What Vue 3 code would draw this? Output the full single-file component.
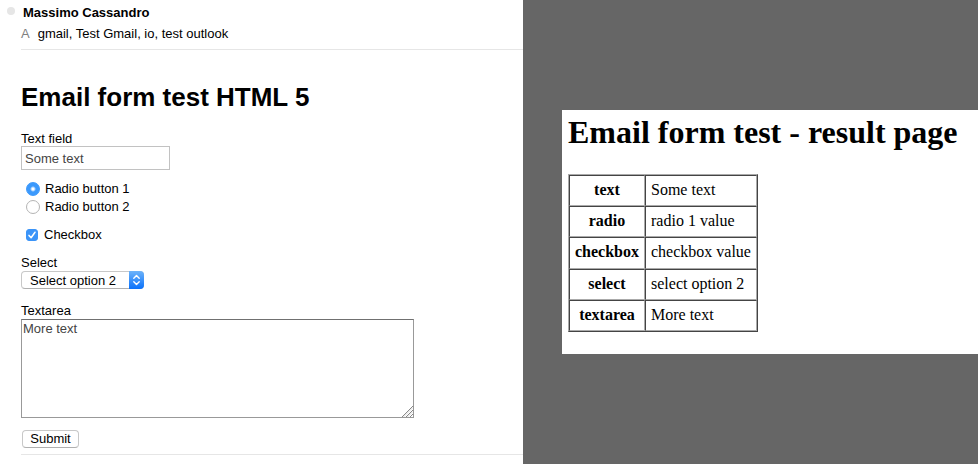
<script setup>
import { ref } from 'vue'

const text = ref('Some text')
const radio = ref('1')
const checked = ref(true)
const option = ref('2')
const more = ref('More text')

const results = [
  ['text', 'Some text'],
  ['radio', 'radio 1 value'],
  ['checkbox', 'checkbox value'],
  ['select', 'select option 2'],
  ['textarea', 'More text'],
]
</script>

<template>
  <main class="page">
    <section class="mail">
      <header class="mail-header">
        <div class="sender"><span class="dot"></span><strong>Massimo Cassandro</strong></div>
        <div class="recipients"><span class="to">A</span>gmail, Test Gmail, io, test outlook</div>
      </header>
      <form class="form" @submit.prevent>
        <h1 class="title">Email form test HTML 5</h1>
        <div class="field">
          <label for="text-field">Text field</label>
          <input id="text-field" v-model="text" class="text-input" type="text" />
        </div>
        <div class="choices">
          <label class="choice"><input v-model="radio" class="radio" type="radio" name="radio" value="1" />Radio button 1</label>
          <label class="choice"><input v-model="radio" class="radio" type="radio" name="radio" value="2" />Radio button 2</label>
        </div>
        <div class="choices">
          <label class="choice">
            <span class="check-wrap">
              <input v-model="checked" class="check" type="checkbox" />
              <svg v-if="checked" class="tick" viewBox="0 0 12 12"><path d="M3 6.4 5.1 8.8 9 3.2" fill="none" stroke="#fff" stroke-width="1.5" stroke-linecap="round" stroke-linejoin="round" /></svg>
            </span>Checkbox
          </label>
        </div>
        <div class="field select-field">
          <label for="select-field">Select</label>
          <div class="select-wrap">
            <select id="select-field" v-model="option" class="select">
              <option value="1">Select option 1</option>
              <option value="2">Select option 2</option>
            </select>
            <svg class="stepper" viewBox="0 0 15 18">
              <defs>
                <linearGradient id="stepper-fill" x1="0" y1="0" x2="0" y2="1">
                  <stop offset="0" stop-color="#6db3fa" />
                  <stop offset="1" stop-color="#0a71fb" />
                </linearGradient>
              </defs>
              <path d="M0 0H11Q15 0 15 4V14Q15 18 11 18H0Z" fill="url(#stepper-fill)" />
              <path d="M4.8 7.3 7.5 4.6 10.2 7.3M4.8 10.7 7.5 13.4 10.2 10.7" fill="none" stroke="#fff" stroke-width="1.4" stroke-linecap="round" stroke-linejoin="round" />
            </svg>
          </div>
        </div>
        <div class="field area-field">
          <label for="area-field">Textarea</label>
          <div class="area-wrap">
            <textarea id="area-field" v-model="more" class="area"></textarea>
            <svg class="grip" viewBox="0 0 11 11"><path d="M0 11 11 0M4 11 11 4M8 11 11 8" stroke="#888" stroke-width="1" /><path d="M1.5 11 11 1.5M5.5 11 11 5.5" stroke="#ccc" stroke-width=".7" /></svg>
          </div>
        </div>
        <button class="submit" type="submit">Submit</button>
      </form>
    </section>
    <section class="side">
      <div class="result">
        <h1 class="result-title">Email form test - result page</h1>
        <table class="table">
          <tbody>
            <tr v-for="[name, value] in results" :key="name">
              <th scope="row">{{ name }}</th>
              <td>{{ value }}</td>
            </tr>
          </tbody>
        </table>
      </div>
    </section>
  </main>
</template>

<style>
body {
  margin: 0;
}
</style>

<style scoped>
* {
  box-sizing: border-box;
}
.page {
  display: grid;
  grid-template-columns: 523fr 455fr;
  min-height: 100vh;
  background: #666;
}
.mail {
  min-width: 0;
  padding-left: 21px;
  background: #fff;
  color: #000;
  font: 13px/16px "Liberation Sans", Arial, sans-serif;
}
.mail-header {
  padding: 5px 0 7px;
  border-bottom: 1px solid #e6e6e6;
}
.sender {
  display: flex;
  margin: 0 0 5px -14px;
  gap: 8px;
}
.dot {
  width: 8px;
  height: 8px;
  margin-top: 2px;
  border-radius: 50%;
  background: #e6e6e6;
}
.to {
  margin-right: 8px;
  color: #808080;
}
.form {
  padding: 31px 0 6px;
  border-bottom: 1px solid #e6e6e6;
}
.title {
  margin: 0 0 18px;
  font-size: 26px;
  line-height: 32px;
}
.field > label {
  display: block;
  line-height: 15px;
}
.text-input {
  display: block;
  width: 149px;
  height: 24px;
  padding: 0 3px;
  border: 1px solid #c2c2c2;
  border-radius: 0;
  background: #fff;
  color: #444;
  font: inherit;
}
.choices {
  padding-left: 5px;
  margin-top: 10px;
}
.choice {
  display: flex;
  align-items: center;
  height: 18px;
}
.radio {
  appearance: none;
  width: 14px;
  height: 14px;
  margin: 0 5px 0 0;
  border: 1px solid #b4b4b4;
  border-radius: 50%;
  background: #fff;
}
.radio:checked {
  border-color: #3b99fc;
  background: radial-gradient(circle, #fff 1px, #3b99fc 3px);
}
.check-wrap {
  position: relative;
  width: 12px;
  height: 12px;
  margin-right: 6px;
}
.check {
  appearance: none;
  display: block;
  width: 12px;
  height: 12px;
  margin: 0;
  border: 1px solid #b4b4b4;
  border-radius: 3px;
}
.check:checked {
  border-color: #3b94f8;
  background: #3b94f8;
}
.tick {
  position: absolute;
  inset: 0;
  pointer-events: none;
}
.select-field {
  margin-top: 11px;
}
.select-wrap {
  position: relative;
  width: 123px;
  margin-top: 1px;
}
.select {
  appearance: none;
  display: block;
  width: 100%;
  height: 18px;
  padding: 1px 16px 0 8px;
  border: 1px solid #c8c8c8;
  border-bottom-color: #b0b0b0;
  border-radius: 4px;
  background: #fff;
  color: #000;
  font: inherit;
}
.stepper {
  position: absolute;
  top: 0;
  right: 0;
  width: 15px;
  height: 18px;
  pointer-events: none;
}
.area-field {
  margin-top: 14px;
}
.area-wrap {
  position: relative;
  max-width: 393px;
  margin-top: 1px;
}
.area {
  display: block;
  width: 100%;
  height: 99px;
  padding: 1px;
  border: 1px solid #999;
  border-top-color: #707070;
  border-radius: 0;
  color: #444;
  font: inherit;
  resize: none;
}
.grip {
  position: absolute;
  right: 1px;
  bottom: 1px;
  width: 11px;
  height: 11px;
  pointer-events: none;
}
.submit {
  display: block;
  width: 57px;
  height: 18px;
  margin: 12px 0 0 1px;
  padding: 0;
  border: 1px solid #c8c8c8;
  border-bottom-color: #b0b0b0;
  border-radius: 4px;
  background: #fff;
  color: #000;
  font: inherit;
}
.side {
  min-width: 0;
  padding: 110px 0 0 39px;
}
.result {
  padding: 4px 0 22px 6px;
  background: #fff;
  color: #000;
  font: 16px/19px "Liberation Serif", "Times New Roman", serif;
}
.result-title {
  margin: 0 0 24px;
  font-size: 32px;
  line-height: 36px;
}
.table {
  height: 158px;
  border: 1px solid;
  border-color: #aaa #444 #444 #aaa;
  border-spacing: 0;
}
.table th,
.table td {
  padding: 4px 5px 6px;
  border: 1px solid;
  border-color: #444 #aaa #aaa #444;
}
</style>
